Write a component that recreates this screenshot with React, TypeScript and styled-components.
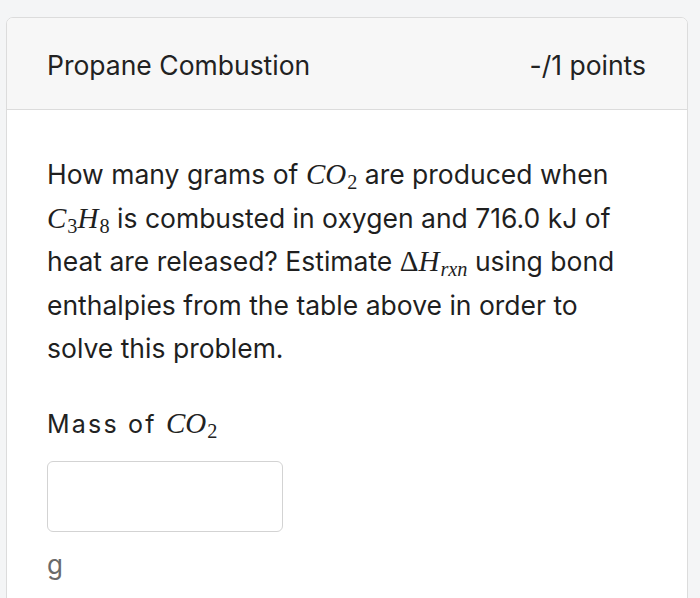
import React from "react";
import styled, { createGlobalStyle } from "styled-components";

const GlobalStyle = createGlobalStyle`
    body {
        margin: 0;
        background: #f4f5f6;
        font-family: Inter, "Noto Sans", sans-serif;
        color: #222;
    }
`;

const Page = styled.div`
    padding: 17px 12px 0 6px;
    height: 598px;
    box-sizing: border-box;
    overflow: hidden;
`;

const Card = styled.div`
    background: #fff;
    border: 1px solid #dcdcdc;
    border-radius: 7px;
    overflow: hidden;
    min-height: 620px;
`;

const Header = styled.div`
    display: flex;
    align-items: center;
    justify-content: space-between;
    height: 92px;
    padding: 2px 41px 0 40px;
    box-sizing: border-box;
    background: #f7f7f7;
    border-bottom: 1px solid #dcdcdc;
    font-size: 26.5px;
`;

const Body = styled.div`
    padding: 43px 40px 0;
`;

const Question = styled.p`
    margin: 0;
    max-width: 592px;
    font-size: 26.5px;
    line-height: 43.6px;
    color: #1f1f1f;
`;

const M = styled.span`
    font-family: "Liberation Serif", "Times New Roman", serif;
    font-style: italic;
    font-size: 29px;
`;

const Up = styled.span`
    font-style: normal;
`;

const Sub = styled.sub<{ $italic?: boolean }>`
    font-size: 0.7em;
    font-style: ${(p) => (p.$italic ? "italic" : "normal")};
    vertical-align: -0.25em;
    line-height: 0;
    margin-left: 1px;
`;

const Label = styled.div`
    margin-top: 34px;
    font-size: 25px;
    letter-spacing: 2.2px;
    line-height: 36px;

    ${M} {
        letter-spacing: 0;
    }
`;

const Field = styled.div`
    margin-top: 19px;
    width: 236px;
    height: 71px;
    border: 1.5px solid #d3d3d3;
    border-radius: 6px;
    box-sizing: border-box;
`;

const Unit = styled.div`
    margin-top: 17px;
    font-size: 26px;
    color: #6a6a6a;
`;

const App: React.FC = () => (
    <>
        <GlobalStyle />
        <Page>
            <Card>
                <Header>
                    <span>Propane Combustion</span>
                    <span>-/1 points</span>
                </Header>
                <Body>
                    <Question>
                        How many grams of{" "}
                        <M>
                            CO<Sub>2</Sub>
                        </M>{" "}
                        are produced when{" "}
                        <M>
                            C<Sub>3</Sub>H<Sub>8</Sub>
                        </M>{" "}
                        is combusted in oxygen and 716.0 kJ of heat are released? Estimate{" "}
                        <M>
                            <Up>Δ</Up>H<Sub $italic>rxn</Sub>
                        </M>{" "}
                        using bond enthalpies from the table above in order to solve this problem.
                    </Question>
                    <Label>
                        Mass of{" "}
                        <M>
                            CO<Sub>2</Sub>
                        </M>
                    </Label>
                    <Field />
                    <Unit>g</Unit>
                </Body>
            </Card>
        </Page>
    </>
);

export default App;
